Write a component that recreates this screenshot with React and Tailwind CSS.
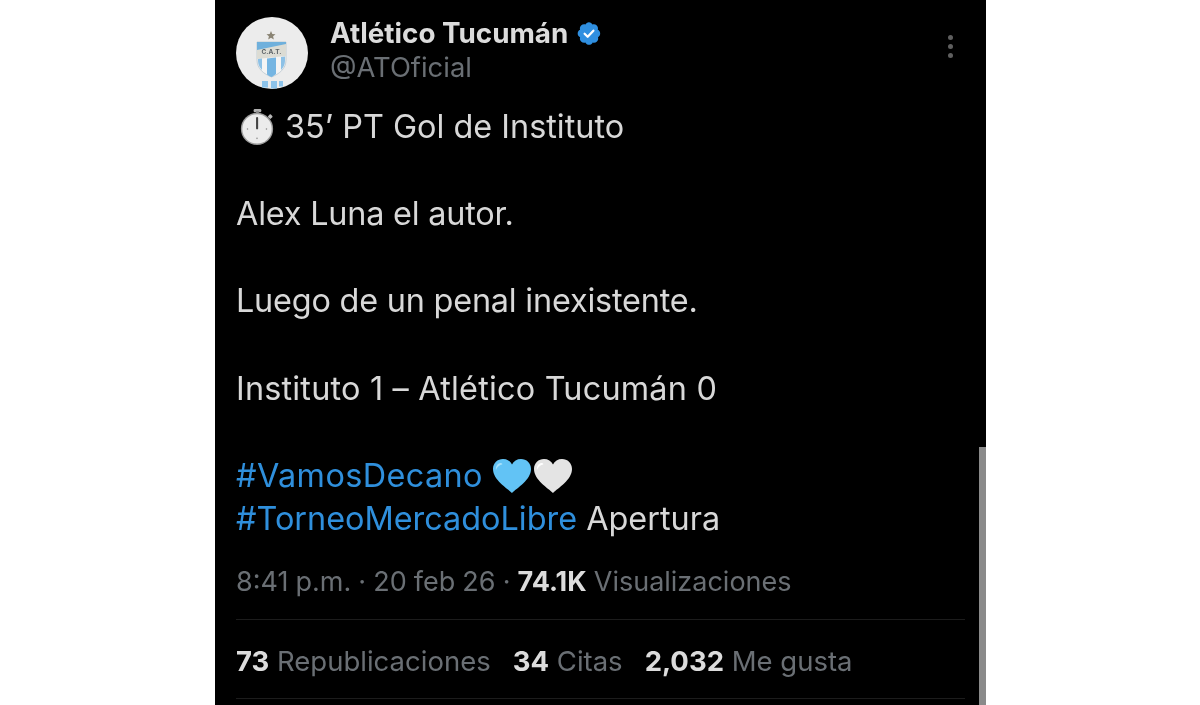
const font = { fontFamily: '"Inter", "Liberation Sans", sans-serif' };

function Crest() {
  return (
    <svg width="72" height="72" viewBox="0 0 72 72" className="block">
      <circle cx="36" cy="36" r="36" fill="#ececec" />
      <polygon points="35,14 36.300,17 39.500,17.300 37.100,19.300 37.800,22.400 35,20.800 32.200,22.400 32.900,19.300 30.500,17.300 33.700,17" fill="#8a8474" />
      <path d="M21 25 H50 V43 C50 52 43 57 35.500 60 C28 57 21 52 21 43 Z" fill="#f4f4f4" stroke="#b9c6cf" strokeWidth="0.800" />
      <path d="M21 25 H50 V29 L21 35 Z" fill="#6fb0dc" />
      <path d="M21 33 L50 27 V39 L21 42 Z" fill="#dcdcd4" />
      <path d="M31 41.500 L40 40.500 V57 C38 58.500 37 59.400 35.500 60 C33.500 59.300 32.500 58.500 31 57.400 Z" fill="#75b5e2" />
      <path d="M22 42 L26 41.600 V53 C24 51 22 48 22 44 Z" fill="#8dc1e6" />
      <path d="M45 40 L49 39.600 V44 C49 48 47 51 45 53 Z" fill="#8dc1e6" />
      <text x="35.500" y="37" textAnchor="middle" fontSize="6.500" fontWeight="700" fill="#5d6468" style={font}>C.A.T.</text>
      <path d="M26 64 H32 V70.500 H26 Z M35 64 H41 V71.500 H35 Z M43 64 H47 V69.500 H43 Z" fill="#8cc3ea" />
    </svg>
  );
}

function Verified() {
  return (
    <svg width="25" height="25" viewBox="0 0 22 22" className="block">
      <path
        fill="#2f8fe0"
        d="M20.400 11c0-1.400-.8-2.700-2.100-3.200.4-1.300.1-2.800-.9-3.800s-2.500-1.300-3.800-.9C13.100 1.800 11.900 1 10.500 1S8 1.800 7.400 3.100c-1.300-.4-2.800-.1-3.800.9s-1.300 2.500-.9 3.800C1.400 8.300.6 9.600.6 11s.8 2.700 2.100 3.200c-.4 1.300-.1 2.800.9 3.800s2.500 1.300 3.800.9c.6 1.300 1.800 2.100 3.200 2.100s2.700-.8 3.200-2.100c1.300.4 2.800.1 3.800-.9s1.300-2.500.9-3.800c1.100-.5 1.900-1.800 1.900-3.200z"
      />
      <path d="M6.700 11.200l2.700 2.700 5-5.400" fill="none" stroke="#fff" strokeWidth="2" strokeLinecap="round" strokeLinejoin="round" />
    </svg>
  );
}

function Stopwatch() {
  return (
    <svg width="36" height="38" viewBox="0 0 38 40" className="block">
      <rect x="15.500" y="1" width="8" height="3.500" rx="1.200" fill="#b0b0b0" />
      <rect x="18" y="3" width="3" height="4" fill="#8a8a8a" />
      <rect x="31" y="7" width="4" height="4" rx="1" transform="rotate(45 33 9)" fill="#b8b8b8" />
      <circle cx="19" cy="22" r="17" fill="#9c9c9c" />
      <circle cx="19" cy="22" r="15.500" fill="#ececec" />
      <rect x="18" y="9.500" width="2.200" height="13" rx="1" fill="#444" />
      <circle cx="19" cy="32" r="0.800" fill="#888" />
      <circle cx="9" cy="22" r="0.800" fill="#888" />
      <circle cx="29" cy="22" r="0.800" fill="#888" />
    </svg>
  );
}

function Heart({ fill, shine }) {
  return (
    <svg width="40" height="36" viewBox="0 0 40 36" className="block">
      <path
        fill={fill}
        d="M20 35C15 30 1 22 1 11 1 5 5.500 1 11 1c4 0 7.400 2 9 5.500C21.600 3 25 1 29 1c5.500 0 10 4 10 10 0 11-14 19-19 24z"
      />
      <path fill={shine} d="M8 5c-3 1-4.500 4-4 7 1-3 3-4.500 6-5.500 1-.5 0-2-2-1.500z" />
    </svg>
  );
}

export default function App() {
  return (
    <div className="h-[705px] w-full overflow-hidden bg-white" style={font}>
      <div className="relative ml-[215px] h-full w-[771px] overflow-hidden bg-black pl-[21px] pr-[21px] pt-[17px]">
        {/* scrollbar */}
        <div className="absolute bottom-0 right-0 top-[447px] w-[7px] bg-[#8a8a8a]"></div>

        <div className="blur-[0.4px]">
          {/* header */}
          <div className="flex items-start">
            <Crest />
            <div className="ml-[22px] -mt-[1px]">
              <div className="flex items-center gap-[9px]">
                <span className="text-[27.800px] font-bold leading-[35px] text-[#dcdcdc]">Atlético Tucumán</span>
                <Verified />
              </div>
              <div className="text-[27.400px] leading-[33px] text-[#6a6f74]">@ATOficial</div>
            </div>
            <div className="ml-auto mr-[12px] mt-[18px] flex flex-col gap-[4px]">
              <div className="h-[5px] w-[5px] rounded-full bg-[#5f5f5f]"></div>
              <div className="h-[5px] w-[5px] rounded-full bg-[#5f5f5f]"></div>
              <div className="h-[5px] w-[5px] rounded-full bg-[#5f5f5f]"></div>
            </div>
          </div>

          {/* tweet text */}
          <div className="mt-[16px] text-[32.400px] leading-[43.600px] text-[#d8d8d8]">
            <p className="mb-[43.600px] flex items-center">
              <span className="ml-[3px] mr-[10px]"><Stopwatch /></span>35’ PT Gol de Instituto
            </p>
            <p className="mb-[43.600px] tracking-[-0.2px]">Alex Luna el autor.</p>
            <p className="mb-[43.600px] tracking-[-0.2px]">Luego de un penal inexistente.</p>
            <p className="mb-[43.600px] tracking-[0.2px]">Instituto 1 – Atlético Tucumán 0</p>
            <p className="flex items-center">
              <span className="tracking-[0.4px] text-[#2f8fdc]">#VamosDecano</span>
              <span className="ml-[9px]"><Heart fill="#62c3f5" shine="#a5e0fb" /></span>
              <span className="ml-[1px]"><Heart fill="#e4e4e4" shine="#ffffff" /></span>
            </p>
            <p>
              <span className="text-[#2f8fdc]">#TorneoMercadoLibre</span> Apertura
            </p>
          </div>

          {/* time row */}
          <div className="mt-[24px] text-[27px] leading-[33px] text-[#6a6f74] [word-spacing:-0.5px]">
            8:41 p.m. · 20 feb 26 · <span className="font-bold text-[#dcdcdc]">74.1K</span> Visualizaciones
          </div>

          {/* counts */}
          <div className="mt-[21px] flex h-[80px] items-center gap-[22px] border-y border-[#1c1c1c] pt-[5px] text-[27.500px] text-[#6a6f74]">
            <span><span className="font-bold text-[#dcdcdc]">73</span> Republicaciones</span>
            <span><span className="font-bold text-[#dcdcdc]">34</span> Citas</span>
            <span><span className="font-bold text-[#dcdcdc]">2,032</span> Me gusta</span>
          </div>
        </div>
      </div>
    </div>
  );
}
